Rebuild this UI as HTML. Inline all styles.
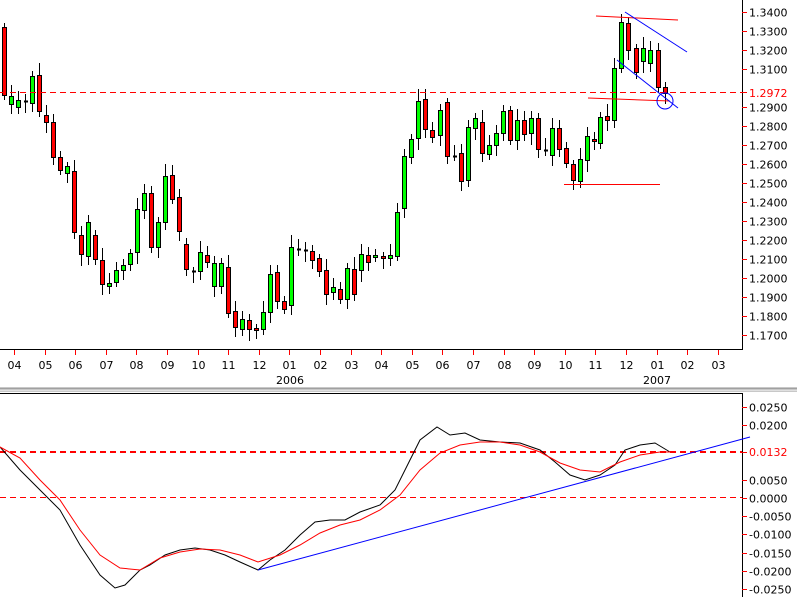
<!DOCTYPE html>
<html><head><meta charset="utf-8"><style>
html,body{margin:0;padding:0;background:#fff;width:797px;height:597px;overflow:hidden}
svg text{font-family:"DejaVu Sans","Liberation Sans",sans-serif;font-size:11px}
</style></head><body>
<svg id="s" width="797" height="597" xmlns="http://www.w3.org/2000/svg">
<rect x="0" y="387" width="797" height="5" fill="#c8c8c8"/>
<line x1="0" y1="388.5" x2="797" y2="388.5" stroke="#a0a0a0"/>
<line x1="0" y1="390.5" x2="797" y2="390.5" stroke="#e0e0e0"/>
<g shape-rendering="crispEdges">
<line x1="0" y1="349.5" x2="742" y2="349.5" stroke="#000"/>
<line x1="742.5" y1="0" x2="742.5" y2="350" stroke="#000"/>
<line x1="0" y1="393.5" x2="742" y2="393.5" stroke="#000"/>
<line x1="742.5" y1="393" x2="742.5" y2="597" stroke="#000"/>
<g id="c"></g>
<line x1="0" y1="92.5" x2="742" y2="92.5" stroke="#f00" stroke-dasharray="6,4"/>
<line x1="0" y1="452" x2="742" y2="452" stroke="#f00" stroke-dasharray="6,4" stroke-width="2"/>
<line x1="0" y1="497.5" x2="742" y2="497.5" stroke="#f00" stroke-dasharray="6,4"/>
</g>
<line x1="596" y1="16" x2="678" y2="20" stroke="#f00"/>
<line x1="588" y1="98" x2="670" y2="101" stroke="#f00"/>
<line x1="564" y1="184.5" x2="660" y2="184.5" stroke="#f00"/>
<line x1="625" y1="12" x2="687" y2="52" stroke="#00f"/>
<line x1="617" y1="60" x2="678" y2="108" stroke="#00f"/>
<circle cx="665" cy="101" r="8" fill="none" stroke="#00f"/>
<polyline fill="none" stroke="#000" points="0,447 20,470 40,490 60,510 80,545 100,575 115,588 125,585 140,570 150,565 165,555 180,550 195,548 210,550 225,555 240,562 258,570 270,560 285,550 300,535 315,522 330,520 345,520 360,512 380,505 395,490 405,470 420,440 437,427 450,435 465,433 480,440 500,442 520,443 540,450 555,462 570,475 585,480 600,475 615,465 625,450 640,445 655,443 670,452"/>
<polyline fill="none" stroke="#f00" points="0,447 20,458 40,480 60,500 80,530 100,555 120,568 140,570 160,558 180,552 200,549 220,550 240,555 258,562 280,555 300,545 320,533 340,525 360,520 380,510 400,495 420,470 440,453 460,445 480,442 500,442 520,445 540,452 560,463 580,470 600,472 620,462 640,455 660,452 672,452"/>
<line x1="258" y1="570" x2="750" y2="437" stroke="#00f"/>
<g id="ax" shape-rendering="crispEdges"></g>
</svg>
<script>
var N="http://www.w3.org/2000/svg";
function el(p,t,a,txt){var e=document.createElementNS(N,t);for(var k in a)e.setAttribute(k,a[k]);if(txt)e.textContent=txt;p.appendChild(e);return e;}
var C=[[4,27,95],[11,104,96],[18,107,100],[25,101,101],[32,103,76],[39,75,111],[46,115,122],[53,122,157],[60,157,170],[67,173,166],[74,171,232],[81,235,254],[88,256,222],[95,235,259],[102,260,284],[109,286,283],[116,282,270],[123,270,265],[130,264,253],[137,252,209],[144,210,193],[151,193,247],[158,247,222],[165,222,176],[172,175,199],[179,197,231],[186,244,269],[193,271,271],[200,271,252],[207,255,262],[214,286,263],[221,286,263],[228,267,313],[235,311,327],[242,329,319],[249,320,329],[256,328,330],[263,329,312],[270,312,274],[277,272,301],[284,301,309],[291,305,247],[298,249,249],[305,250,250],[312,251,260],[319,258,271],[326,270,294],[333,292,287],[340,289,299],[347,299,268],[354,269,294],[361,270,254],[368,255,262],[375,256,255],[383,256,258],[390,258,255],[397,256,212],[404,208,156],[411,157,139],[418,138,101],[425,99,129],[432,130,137],[440,135,110],[447,102,156],[454,156,156],[461,153,181],[468,180,127],[475,128,118],[482,122,153],[489,154,145],[496,145,133],[503,133,111],[510,110,140],[517,140,120],[524,120,134],[531,133,118],[538,118,149],[545,150,150],[552,155,128],[559,128,149],[566,148,163],[573,164,180],[580,181,159],[587,160,136],[594,139,141],[600,143,117],[607,116,120],[614,120,68],[621,68,22],[628,23,50],[636,48,72],[643,61,48],[650,63,50],[658,50,87],[665,87,93]];
var g=document.getElementById('c');
C.forEach(function(c,i){var x=c[0],o=c[1],cl=c[2],t=Math.min(o,cl),b=Math.max(o,cl);var w=4+(i*7)%9;
el(g,'line',{x1:x+0.5,y1:t-w,x2:x+0.5,y2:b+5+(i*5)%8,stroke:'#000'});
if(o==cl){el(g,'line',{x1:x-1,y1:o+0.5,x2:x+3,y2:o+0.5,stroke:'#000','stroke-width':2});}
else el(g,'rect',{x:x-1.5,y:t+0.5,width:4,height:Math.max(b-t,2),fill:cl>o?'#f00':'#0f0',stroke:'#000'});});
var a=document.getElementById('ax');
var pr=["1.3400","1.3300","1.3200","1.3100","1.2900","1.2800","1.2700","1.2600","1.2500","1.2400","1.2300","1.2200","1.2100","1.2000","1.1900","1.1800","1.1700"];
pr.forEach(function(p){var v=parseFloat(p);var y=Math.round(12+(1.34-v)*1900)+0.5;el(a,'line',{x1:742,y1:y,x2:747,y2:y,stroke:'#f00'});el(a,'text',{x:749,y:y+4,fill:'#000'},p);});
el(a,'line',{x1:742,y1:92.5,x2:747,y2:92.5,stroke:'#f00'});el(a,'text',{x:749,y:97,fill:'#f00'},'1.2972');
var lv=["0.0250","0.0200","0.0050","0.0000","-0.0050","-0.0100","-0.0150","-0.0200","-0.0250"];
lv.forEach(function(p){var v=parseFloat(p);var y=Math.round(498-v*3640)+0.5;el(a,'line',{x1:742,y1:y,x2:747,y2:y,stroke:'#f00'});el(a,'text',{x:749,y:y+4,fill:'#000'},p);});
el(a,'line',{x1:742,y1:452.5,x2:747,y2:452.5,stroke:'#f00'});el(a,'text',{x:749,y:456,fill:'#f00'},'0.0132');
var m=["04","05","06","07","08","09","10","11","12","01","02","03","04","05","06","07","08","09","10","11","12","01","02","03"];
m.forEach(function(s,i){var x=Math.round(14+i*30.6)+0.5;el(a,'line',{x1:x,y1:350,x2:x,y2:355,stroke:'#f00'});el(a,'text',{x:x,y:369,'text-anchor':'middle',fill:'#000'},s);});
el(a,'text',{x:290,y:384,'text-anchor':'middle',fill:'#000'},'2006');
el(a,'text',{x:657,y:384,'text-anchor':'middle',fill:'#000'},'2007');
</script>
</body></html>
